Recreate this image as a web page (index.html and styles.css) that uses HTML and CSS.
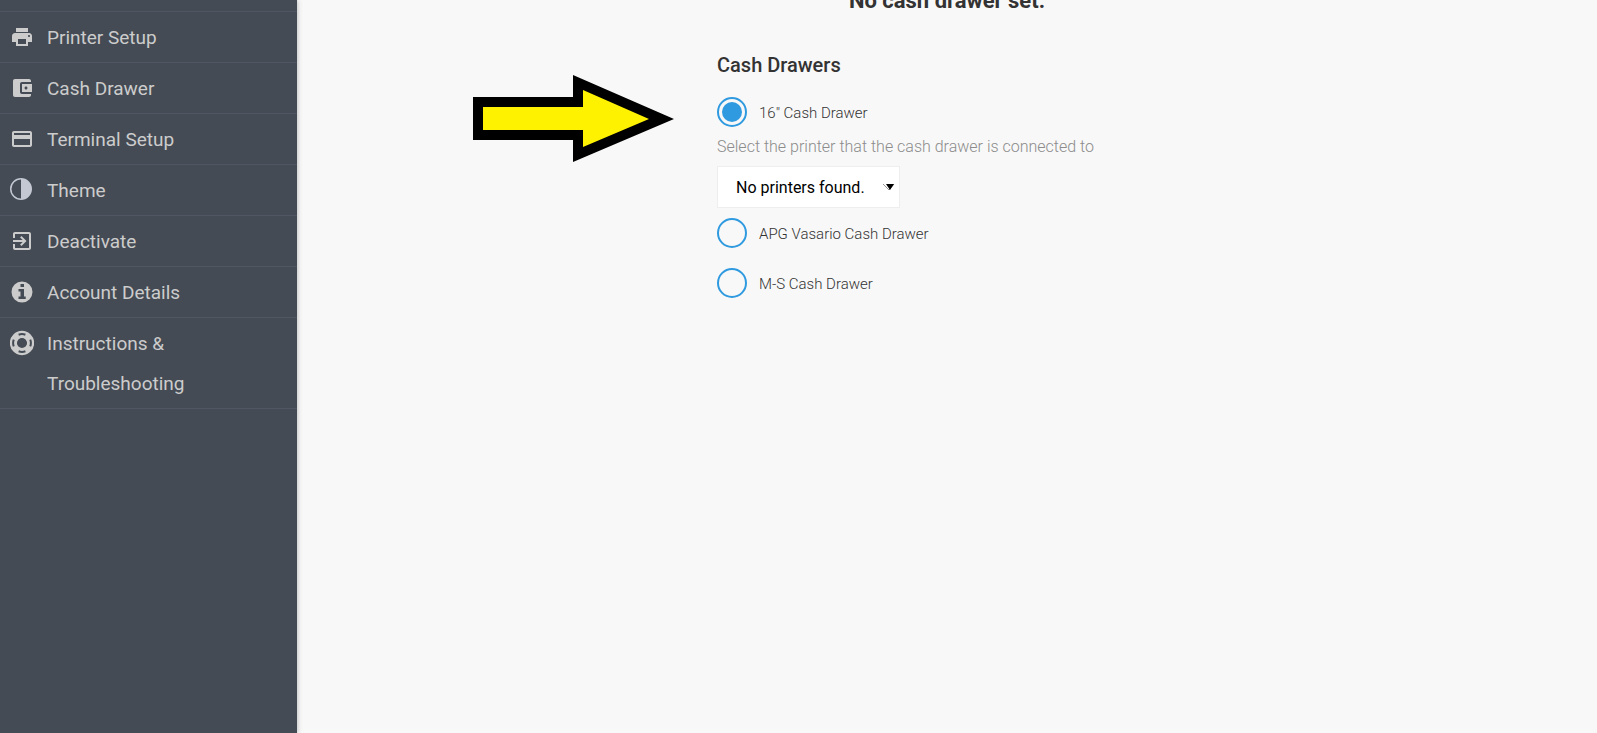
FILE: index.html
```html
<!DOCTYPE html>
<html lang="en">
<head>
    <meta charset="UTF-8">
    <meta name="viewport" content="width=device-width, initial-scale=1.0">
    <title>Cash Drawer</title>
    <link rel="stylesheet" href="styles.css">
</head>
<body>

    <nav class="sidebar">
        <a class="menu-item" href="#printer">
            <svg class="icon" viewBox="0 0 24 24"><path d="M19 8H5c-1.660 0-3 1.340-3 3v6h4v4h12v-4h4v-6c0-1.660-1.340-3-3-3zm-3 11H8v-5h8v5zm3-7c-.55 0-1-.45-1-1s.45-1 1-1 1 .45 1 1-.45 1-1 1zm-1-9H6v4h12V3z"/></svg>
            <span>Printer Setup</span>
        </a>
        <a class="menu-item" href="#drawer">
            <svg class="icon" viewBox="0 0 24 24"><path d="M21 18v1c0 1.100-.9 2-2 2H5c-1.110 0-2-.9-2-2V5c0-1.100.89-2 2-2h14c1.100 0 2 .9 2 2v1h-9c-1.110 0-2 .9-2 2v8c0 1.100.89 2 2 2h9zm-9-2h10V8H12v8zm4-2.500c-.83 0-1.500-.67-1.500-1.500s.67-1.500 1.500-1.500 1.500.67 1.500 1.500-.67 1.500-1.500 1.500z"/></svg>
            <span>Cash Drawer</span>
        </a>
        <a class="menu-item" href="#terminal">
            <svg class="icon" viewBox="0 0 24 24"><path d="M20 4H4c-1.110 0-1.990.89-1.990 2L2 18c0 1.110.89 2 2 2h16c1.110 0 2-.89 2-2V6c0-1.110-.89-2-2-2zm0 14H4v-6h16v6zm0-10H4V6h16v2z"/></svg>
            <span>Terminal Setup</span>
        </a>
        <a class="menu-item" href="#theme">
            <svg class="icon icon-theme" viewBox="0 0 24 24"><path fill-rule="evenodd" d="M11 0a11 11 0 1 0 0 22a11 11 0 0 0 0-22zM11 1.500v19a9.500 9.500 0 0 1 0-19z"/></svg>
            <span>Theme</span>
        </a>
        <a class="menu-item" href="#deactivate">
            <svg class="icon" viewBox="0 0 24 24"><path d="M10.090 15.590L11.500 17l5-5-5-5-1.410 1.410L12.670 11H3v2h9.670l-2.580 2.590zM19 3H5c-1.110 0-2 .9-2 2v4h2V5h14v14H5v-4H3v4c0 1.100.89 2 2 2h14c1.100 0 2-.9 2-2V5c0-1.100-.9-2-2-2z"/></svg>
            <span>Deactivate</span>
        </a>
        <a class="menu-item" href="#account">
            <svg class="icon" viewBox="0 0 24 24"><path fill-rule="evenodd" d="M12 1.500a10.500 10.500 0 1 0 0 21a10.500 10.500 0 0 0 0-21zM10.500 4h3.500v3h-3.500zM8.500 9H14v7.500h1.700V19H8.500v-2.500h2v-5h-2z"/></svg>
            <span>Account Details</span>
        </a>
        <a class="menu-item" href="#help">
            <svg class="icon" viewBox="0 0 24 24">
                <circle class="ring-fill" cx="12" cy="12" r="8.500"/>
                <circle class="ring-gap" cx="12" cy="12" r="8.900" pathLength="80"/>
                <circle class="ring-line" cx="12" cy="12" r="11.400"/>
                <circle class="ring-line" cx="12" cy="12" r="5.800"/>
            </svg>
            <span>Instructions &amp; Troubleshooting</span>
        </a>
    </nav>

    <main class="content">
        <h1 class="status">No cash drawer set.</h1>

        <form class="drawers">
            <h2>Cash Drawers</h2>

            <label class="option">
                <input type="radio" name="drawer" checked>
                <span>16″ Cash Drawer</span>
            </label>

            <label class="hint" for="printer">Select the printer that the cash drawer is connected to</label>
            <div class="select-box">
                <select id="printer">
                    <option>No printers found.</option>
                </select>
                <svg class="caret" viewBox="0 0 12 8"><path class="caret-back" d="M0 1l6 6 5-6"/><path d="M3 1h8L7 7z"/></svg>
            </div>

            <label class="option">
                <input type="radio" name="drawer">
                <span>APG Vasario Cash Drawer</span>
            </label>
            <label class="option">
                <input type="radio" name="drawer">
                <span>M-S Cash Drawer</span>
            </label>

            <svg class="pointer" viewBox="0 0 201 88">
                <path d="M0 22h100V0l101 44L100 87V65H0z"/>
                <path class="pointer-fill" d="M10 32h100V15l66 29-66 28V55H10z"/>
            </svg>
        </form>
    </main>

</body>
</html>
```

FILE: styles.css
```css
body {
    margin: 0;
    min-height: 100vh;
    display: flex;
    background: #f8f8f8;
    color: #333;
    font-family: Roboto, "Liberation Sans", sans-serif;
    overflow: hidden;
}

/* Sidebar */
.sidebar {
    width: 297px;
    flex-shrink: 0;
    box-sizing: border-box;
    padding-top: 11px;
    background: #444b54;
    box-shadow: 0 0 5px rgba(0, 0, 0, 0.3);
}

.menu-item {
    display: flex;
    gap: 13px;
    padding: 6px 100px 4px 10px;
    border-top: 1px solid #505762;
    color: #ccc;
    font-size: 19px;
    line-height: 40px;
    text-decoration: none;
}

.menu-item:last-child {
    border-bottom: 1px solid #505762;
}

.icon {
    width: 24px;
    height: 38px;
    flex-shrink: 0;
    fill: #ccc;
}

.icon-theme {
    fill: #c3c8d2;
}

.ring-fill,
.ring-line,
.ring-gap {
    fill: none;
    stroke: #ccc;
}

.ring-fill {
    stroke-width: 6;
}

.ring-line {
    stroke-width: 1.500;
}

.ring-gap {
    stroke: #444b54;
    stroke-width: 2;
    stroke-dasharray: 10 10;
    stroke-dashoffset: 5;
}

/* Main area */
.content {
    flex: 1;
}

.status {
    margin: -14px 0 27px;
    font-size: 22px;
    font-weight: 700;
    line-height: 30px;
    text-align: center;
}

.drawers {
    position: relative;
    width: 460px;
    margin: 0 auto;
}

.drawers h2 {
    margin: 0;
    font-size: 20px;
    font-weight: 500;
    line-height: 44px;
}

.option {
    display: flex;
    align-items: center;
    gap: 12px;
    height: 50px;
    font-size: 15px;
    font-weight: 300;
}

.option span {
    padding-top: 2px;
}

.option input {
    appearance: none;
    box-sizing: border-box;
    width: 30px;
    height: 30px;
    margin: 0;
    padding: 3px;
    border: 2px solid #2f9adf;
    border-radius: 50%;
}

.option input:checked {
    background: #2f9adf content-box;
}

.hint {
    display: block;
    margin-bottom: 9px;
    color: #8c8c8c;
    font-size: 16px;
    font-weight: 300;
    line-height: 20px;
}

.select-box {
    position: relative;
    width: 183px;
}

.select-box select {
    appearance: none;
    display: block;
    box-sizing: border-box;
    width: 100%;
    height: 42px;
    padding: 0 18px;
    border: 1px solid #eee;
    border-radius: 0;
    background: #fff;
    color: #000;
    font-family: inherit;
    font-size: 16px;
}

.caret {
    position: absolute;
    top: 17px;
    right: 5px;
    width: 12px;
    height: 8px;
    pointer-events: none;
}

.caret-back {
    fill: none;
    stroke: #999;
}

/* Arrow over the page, pointing at the first option */
.pointer {
    position: absolute;
    top: 32px;
    left: -244px;
    width: 201px;
    height: 88px;
}

.pointer-fill {
    fill: #fff200;
}
```
